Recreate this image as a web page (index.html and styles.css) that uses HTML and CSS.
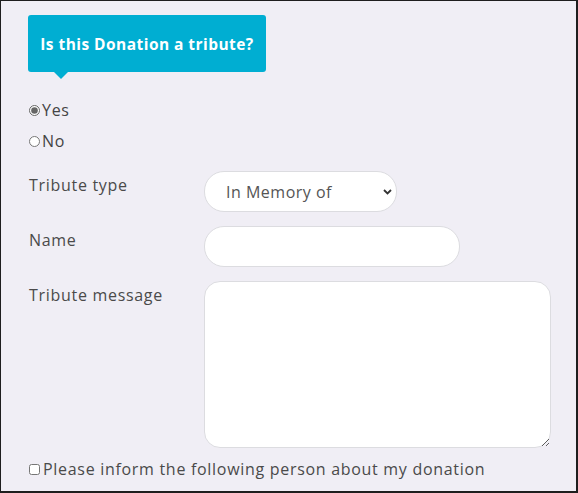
FILE: index.html
```html
<!DOCTYPE html>
<html>
<head>
<meta charset="utf-8">
<link rel="stylesheet" href="styles.css">
</head>
<body>
<div class="frame">
  <div class="badge">Is this Donation a tribute?</div>
  <div class="choices">
    <label class="choice"><input type="radio" name="tribute" checked>Yes</label>
    <label class="choice"><input type="radio" name="tribute">No</label>
  </div>
  <div class="fields">
    <label class="field-label">Tribute type</label>
    <div class="select-wrap">
      <select class="select"><option>In Memory of</option><option>In Honor of</option></select>
      <svg class="chev" width="9" height="6" viewBox="0 0 9 6"><path d="M1 1 L4.5 4.5 L8 1" fill="none" stroke="#333" stroke-width="1.8"/></svg>
    </div>
    <label class="field-label">Name</label>
    <div><input class="text" type="text"></div>
    <label class="field-label">Tribute message</label>
    <div><textarea class="area"></textarea></div>
  </div>
  <label class="inform"><input type="checkbox">Please inform the following person about my donation</label>
</div>
</body>
</html>
```

FILE: styles.css
```css
html, body { margin: 0; padding: 0; }
body { font-family: "Open Sans", "Liberation Sans", sans-serif; }
.frame {
  width: 578px; height: 493px; box-sizing: border-box;
  border: 1px solid #1e1e1e; border-right-width: 2px; border-bottom-width: 2px;
  background: #f0eef5;
  padding: 14px 0 0 27px;
  color: #4a4a4a;
  letter-spacing: 0.7px;
}
.badge {
  position: relative;
  display: inline-flex; align-items: center; justify-content: center;
  width: 238px; height: 57px; box-sizing: border-box;
  background: #00aed2; color: #fff;
  border-radius: 3px;
  font-weight: 700; font-size: 15.5px; letter-spacing: 0.45px;
}
.badge::after {
  content: ""; position: absolute; left: 26px; bottom: -7px;
  border-left: 7px solid transparent; border-right: 7px solid transparent;
  border-top: 7px solid #00aed2;
}
.choices { display: flex; flex-direction: column; gap: 9px; margin-top: 27px; }
.choice { display: flex; align-items: center; font-size: 16px; height: 22px; color: #444; }
.choice input { width: 11px; height: 11px; margin: 0 2px 0 1px; accent-color: #666; }
.fields {
  display: grid; grid-template-columns: 176px auto; row-gap: 14px;
  margin-top: 19px; justify-items: start;
}
.field-label { font-size: 16px; line-height: 28px; padding-left: 1px; color: #4a4a4a; }
.select-wrap { position: relative; }
.select {
  appearance: none; -webkit-appearance: none;
  width: 193px; height: 41px; box-sizing: border-box;
  border: 1px solid #dcdce0; border-radius: 20px; background: #fff;
  padding: 0 0 0 21px; font-family: inherit; font-size: 16px; color: #555;
  letter-spacing: 0.5px;
}
.chev { position: absolute; right: 5px; top: 18px; }
.text {
  width: 256px; height: 41px; box-sizing: border-box;
  border: 1px solid #dcdce0; border-radius: 20px; background: #fff; display: block;
}
.area {
  width: 347px; height: 167px; box-sizing: border-box; display: block;
  border: 1px solid #dcdce0; border-radius: 16px; background: #fff;
}
.inform { display: flex; align-items: center; margin-top: 10px; font-size: 16px; color: #4a4a4a; }
.inform input { width: 11px; height: 11px; margin: 0 3px 0 1px; }
```
